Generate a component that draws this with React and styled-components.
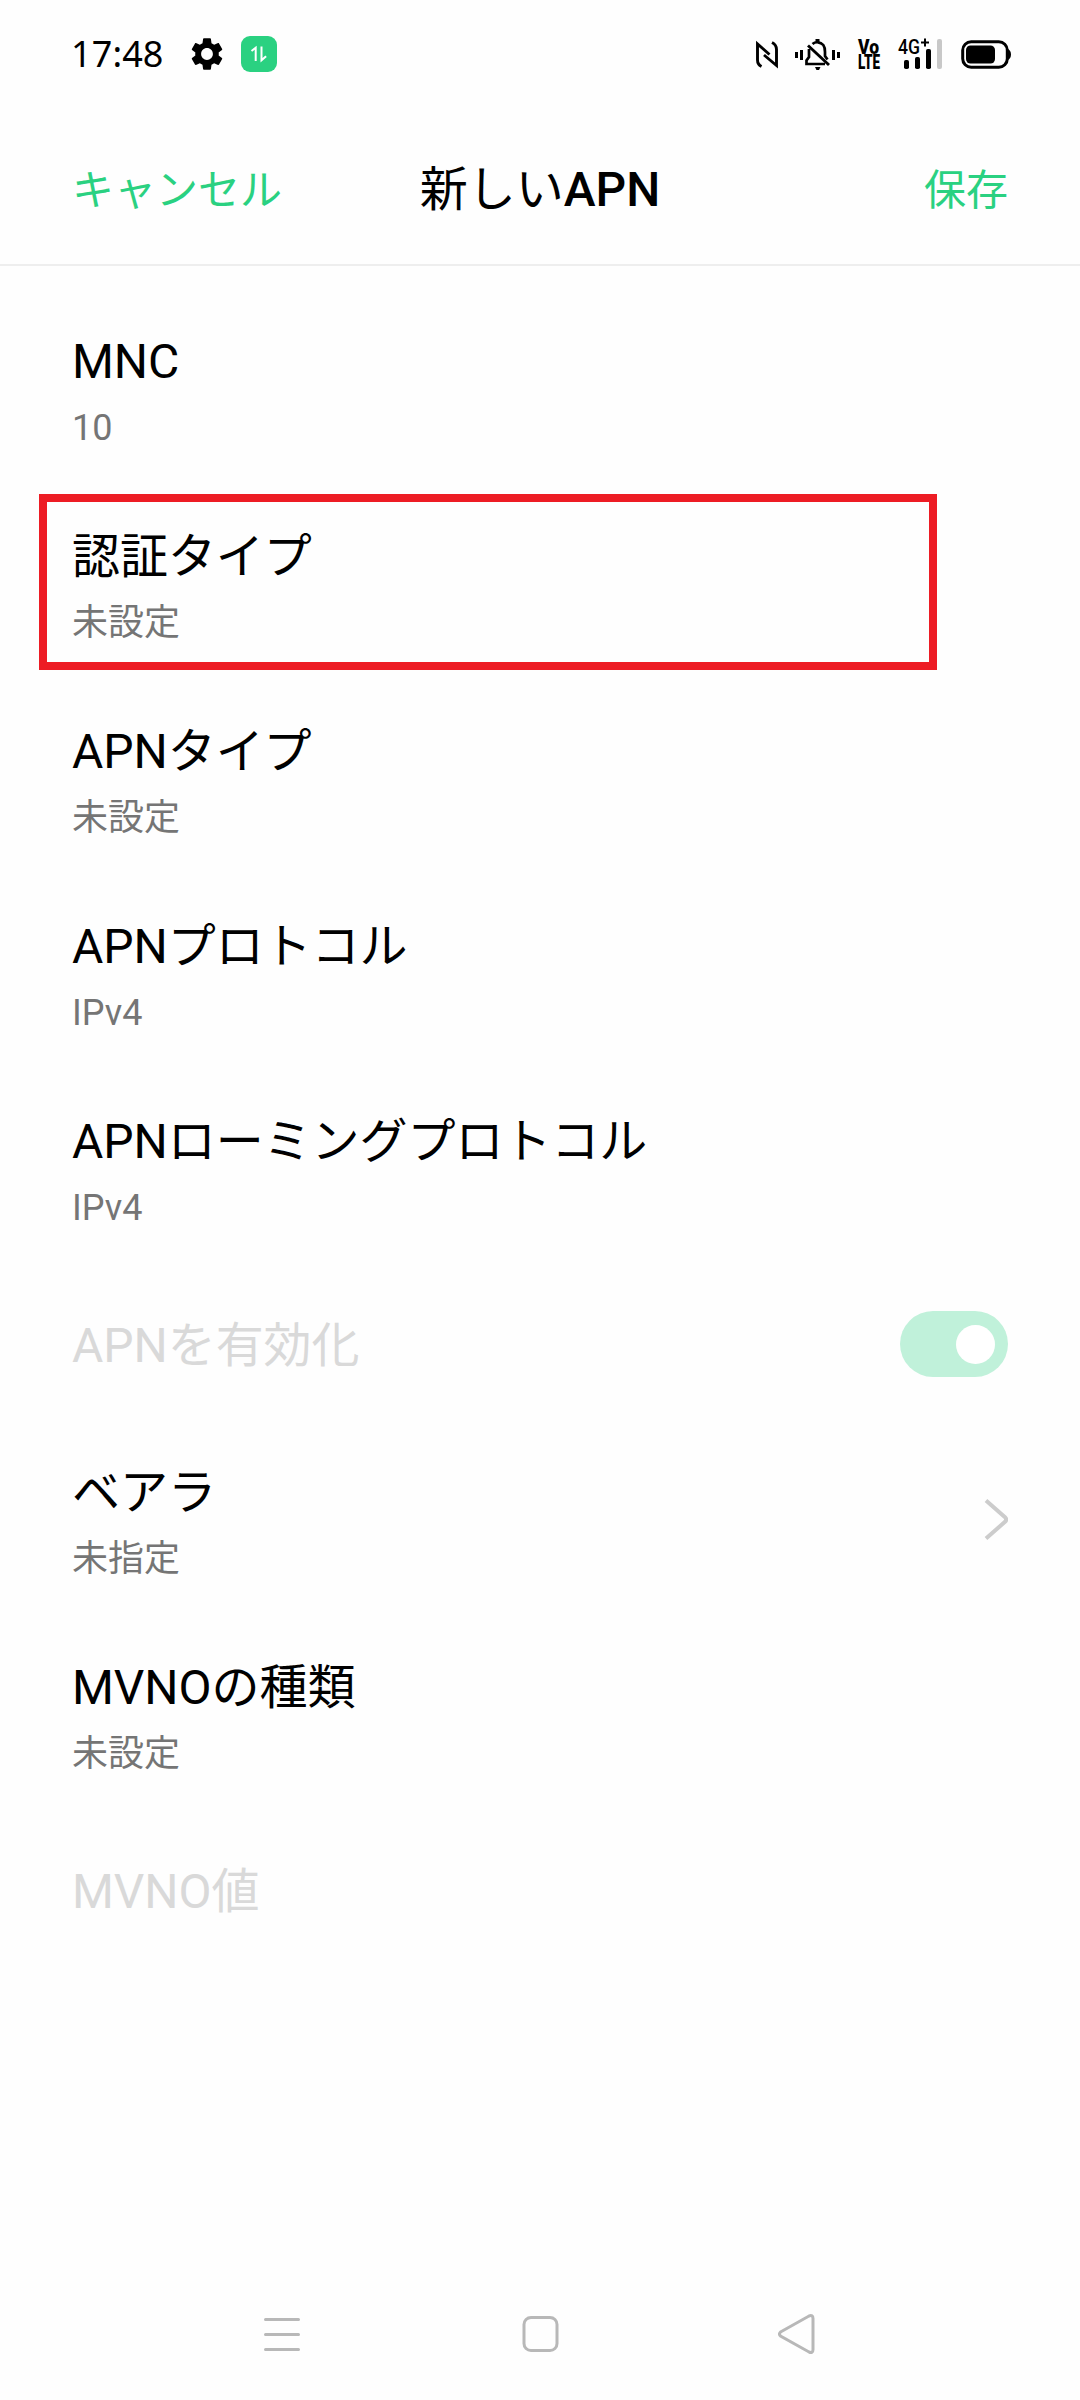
import React from 'react';
import styled, { createGlobalStyle } from 'styled-components';

const GlobalStyle = createGlobalStyle`
  * {
    box-sizing: border-box;
  }

  body {
    margin: 0;
    background: #fefefe;
    font-family: Roboto, 'Noto Sans CJK JP', sans-serif;
    color: #000;
  }
`;

const Screen = styled.div`
  display: flex;
  flex-direction: column;
  width: 1080px;
  height: 2400px;
  overflow: hidden;
`;

const StatusBar = styled.div`
  display: flex;
  justify-content: space-between;
  height: 108px;
  padding: 0 68px 0 71px;
`;

const StatusGroup = styled.div`
  display: flex;
  align-items: center;
  height: 108px;
`;

const Clock = styled.span`
  width: 119px;
  font-family: 'Noto Sans', sans-serif;
  font-size: 36px;
  line-height: 108px;
  letter-spacing: 0.1px;
`;

const StatusIcon = styled.svg`
  display: block;
  flex: none;
  margin-left: ${({ $gap }) => $gap || 0}px;
  overflow: visible;
`;

const Volte = styled.div`
  display: flex;
  flex-direction: column;
  width: 24px;
  margin-left: 16px;
  padding-left: 1px;
  font-family: 'Open Sans', Roboto, sans-serif;
`;

const Header = styled.header`
  display: grid;
  grid-template-columns: 1fr auto 1fr;
  align-items: center;
  height: 158px;
  padding: 8px 72px 0;
  border-bottom: 2px solid #eee;
`;

const Action = styled.button`
  justify-self: ${({ $end }) => ($end ? 'end' : 'start')};
  padding: 2px 0 0;
  border: none;
  background: none;
  color: #2ad181;
  font-family: inherit;
  font-size: 42px;
  line-height: 60px;
`;

const Title = styled.h1`
  margin: 0;
  font-size: 48px;
  font-weight: 400;
  line-height: 60px;
`;

const Strong = styled.span`
  font-weight: 500;
`;

const List = styled.main`
  flex: 1;
  padding-top: 25px;
`;

const Row = styled.div`
  position: relative;
  display: flex;
  justify-content: space-between;
  align-items: center;
  height: ${({ $single }) => ($single ? 156 : 195)}px;
  padding: 0 72px;
`;

const Texts = styled.div`
  padding-top: ${({ $single }) => ($single ? 4 : 6)}px;
`;

const Label = styled.div`
  font-size: 48px;
  line-height: 60px;
  letter-spacing: -0.05px;
  color: ${({ $disabled }) => ($disabled ? '#d9d9d9' : '#000')};
`;

const Value = styled.div`
  margin-top: 12px;
  font-size: 36px;
  line-height: 48px;
  color: #757575;
`;

const Highlight = styled.div`
  position: absolute;
  top: 8px;
  left: 39px;
  width: 898px;
  height: 176px;
  border: 8px solid #ed1c24;
`;

const Toggle = styled.div`
  display: flex;
  justify-content: flex-end;
  align-items: center;
  width: 108px;
  height: 66px;
  padding-right: 13px;
  border-radius: 33px;
  background: #c0f1da;
`;

const Knob = styled.div`
  width: 39px;
  height: 39px;
  border-radius: 50%;
  background: #fff;
`;

const NavBar = styled.nav`
  display: flex;
  justify-content: space-between;
  align-items: center;
  height: 132px;
  padding: 0 264px 0 263px;
`;

const rows = [
  { label: 'MNC', value: '10' },
  { label: '認証タイプ', value: '未設定', highlighted: true },
  { label: 'APNタイプ', value: '未設定' },
  { label: 'APNプロトコル', value: 'IPv4' },
  { label: 'APNローミングプロトコル', value: 'IPv4' },
  { label: 'APNを有効化', disabled: true, toggle: true },
  { label: 'ベアラ', value: '未指定', link: true },
  { label: 'MVNOの種類', value: '未設定' },
  { label: 'MVNO値', disabled: true },
];

function GearIcon() {
  return (
    <StatusIcon width="34" height="34" viewBox="1.6 1.6 20.8 20.8">
      <path d="M19.14 12.94c.04-.3.06-.61.06-.94 0-.32-.02-.64-.07-.94l2.03-1.58c.18-.14.23-.41.12-.61l-1.92-3.32c-.12-.22-.37-.29-.59-.22l-2.39.96c-.5-.38-1.03-.7-1.62-.94l-.36-2.54c-.04-.24-.24-.41-.48-.41h-3.84c-.24 0-.43.17-.47.41l-.36 2.54c-.59.24-1.13.57-1.62.94l-2.39-.96c-.22-.08-.47 0-.59.22L2.74 8.87c-.12.21-.08.47.12.61l2.03 1.58c-.05.3-.09.63-.09.94s.02.64.07.94l-2.03 1.58c-.18.14-.23.41-.12.61l1.92 3.32c.12.22.37.29.59.22l2.39-.96c.5.38 1.03.7 1.62.94l.36 2.54c.05.24.24.41.48.41h3.84c.24 0 .44-.17.47-.41l.36-2.54c.59-.24 1.13-.56 1.62-.94l2.39.96c.22.08.47 0 .59-.22l1.92-3.32c.12-.22.07-.47-.12-.61l-2.01-1.58zM12 15.6c-1.98 0-3.6-1.62-3.6-3.6s1.62-3.6 3.6-3.6 3.6 1.62 3.6 3.6-1.62 3.6-3.6 3.6z" />
    </StatusIcon>
  );
}

function DataIcon() {
  return (
    <StatusIcon $gap={17} width="36" height="36" viewBox="0 0 36 36">
      <rect width="36" height="36" rx="9" fill="#2ad181" />
      <path
        d="M10.5 15l4.2-3.2V25M20.5 10.5v13.7l4.6-4"
        fill="none"
        stroke="#fff"
        strokeWidth="2"
      />
    </StatusIcon>
  );
}

function NfcIcon() {
  return (
    <StatusIcon width="22" height="27" viewBox="0 0 22 27">
      <path
        d="M5.5 25.5C2.5 24 1.5 22.5 1.5 19V3l12 10.5M16 1.5c3 1.5 4.5 3 4.5 7V24.5L8 14"
        fill="none"
        stroke="#000"
        strokeWidth="2.9"
      />
    </StatusIcon>
  );
}

function MutedBellIcon() {
  return (
    <StatusIcon $gap={17} width="46" height="31" viewBox="0 0 46 31">
      <path d="M0 13h3v6H0zM5 11h3v10H5zM37 11h3v10h-3zM42 13h3v6h-3zM20.5 0h4v3h-4zM20 28h5.5l-1.5 3h-2.5z" />
      <path
        d="M17.5 5c3-2.6 8-2.3 10.8 1 1.5 2 1.7 4 1.7 7v4l2.5 3.5M14 10V18l-2.5 3.5V25H30"
        fill="none"
        stroke="#000"
        strokeWidth="2.7"
      />
      <path d="M13 6.5L34 26" stroke="#000" strokeWidth="2.9" />
    </StatusIcon>
  );
}

function VolteLine({ children, width }) {
  return (
    <svg width="23" height="15.5" viewBox="0 0 23 15.5" overflow="visible">
      <text
        y="14.5"
        fontFamily="Roboto, sans-serif"
        fontWeight="900"
        fontSize="19.5"
        textLength={width}
        lengthAdjust="spacingAndGlyphs"
      >
        {children}
      </text>
    </svg>
  );
}

function SignalIcon() {
  return (
    <StatusIcon $gap={17} width="46" height="32" viewBox="0 0 46 32">
      <text
        x="0"
        y="15.5"
        fontFamily="Roboto, sans-serif"
        fontWeight="500"
        fontSize="20"
        textLength="22"
        lengthAdjust="spacingAndGlyphs"
      >
        4G
      </text>
      <path d="M23 4.5h8M27 .5v8" stroke="#000" strokeWidth="2" />
      <rect x="6" y="22" width="5" height="9" rx="1.8" />
      <rect x="17" y="19" width="5" height="12" rx="1.8" />
      <rect x="28" y="11" width="5" height="20" rx="1.8" />
      <rect x="39" y="1" width="5" height="30" rx="2" fill="#c8c8c8" />
    </StatusIcon>
  );
}

function BatteryIcon() {
  return (
    <StatusIcon $gap={17} width="51" height="29" viewBox="0 0 51 29">
      <rect
        x="1.7"
        y="1.7"
        width="44.6"
        height="25.6"
        rx="8.5"
        fill="none"
        stroke="#000"
        strokeWidth="3"
      />
      <rect x="5" y="5.5" width="29" height="18" rx="4.5" />
      <path d="M47 9c2 1 3 3 3 5.5s-1 4.5-3 5.5z" />
    </StatusIcon>
  );
}

function Chevron() {
  return (
    <svg width="24" height="42" viewBox="0 0 24 42">
      <path
        d="M2 1.5L21 18.2q2.3 2.3 0 4.6L2 39.5"
        fill="none"
        stroke="#ccc"
        strokeWidth="4"
      />
    </svg>
  );
}

function SettingRow({ label, value, disabled, highlighted, toggle, link }) {
  return (
    <Row $single={!value}>
      <Texts $single={!value}>
        <Label $disabled={disabled}>{label}</Label>
        {value && <Value>{value}</Value>}
      </Texts>
      {toggle && (
        <Toggle>
          <Knob />
        </Toggle>
      )}
      {link && <Chevron />}
      {highlighted && <Highlight />}
    </Row>
  );
}

export default function App() {
  return (
    <Screen>
      <GlobalStyle />
      <StatusBar>
        <StatusGroup>
          <Clock>17:48</Clock>
          <GearIcon />
          <DataIcon />
        </StatusGroup>
        <StatusGroup>
          <NfcIcon />
          <MutedBellIcon />
          <Volte>
            <VolteLine width={21}>Vo</VolteLine>
            <VolteLine width={22}>LTE</VolteLine>
          </Volte>
          <SignalIcon />
          <BatteryIcon />
        </StatusGroup>
      </StatusBar>
      <Header>
        <Action>キャンセル</Action>
        <Title>
          新しい<Strong>APN</Strong>
        </Title>
        <Action $end>保存</Action>
      </Header>
      <List>
        {rows.map(row => (
          <SettingRow key={row.label} {...row} />
        ))}
      </List>
      <NavBar>
        <svg width="38" height="42" viewBox="0 0 38 42">
          <path
            d="M2.5 6.5h33M2.5 21.5h33M2.5 36.5h33"
            stroke="#b8b8b8"
            strokeWidth="3"
            strokeLinecap="round"
          />
        </svg>
        <svg width="38" height="42" viewBox="0 0 38 42">
          <rect
            x="3"
            y="4.5"
            width="33"
            height="33"
            rx="7"
            fill="none"
            stroke="#b8b8b8"
            strokeWidth="3"
          />
        </svg>
        <svg width="38" height="42" viewBox="0 0 38 42">
          <path
            d="M2.5 19L31 3q4-1.5 4 2.5V36.5q0 4-4 2.5L2.5 23q-2-2 0-4z"
            fill="none"
            stroke="#b8b8b8"
            strokeWidth="3"
          />
        </svg>
      </NavBar>
    </Screen>
  );
}
